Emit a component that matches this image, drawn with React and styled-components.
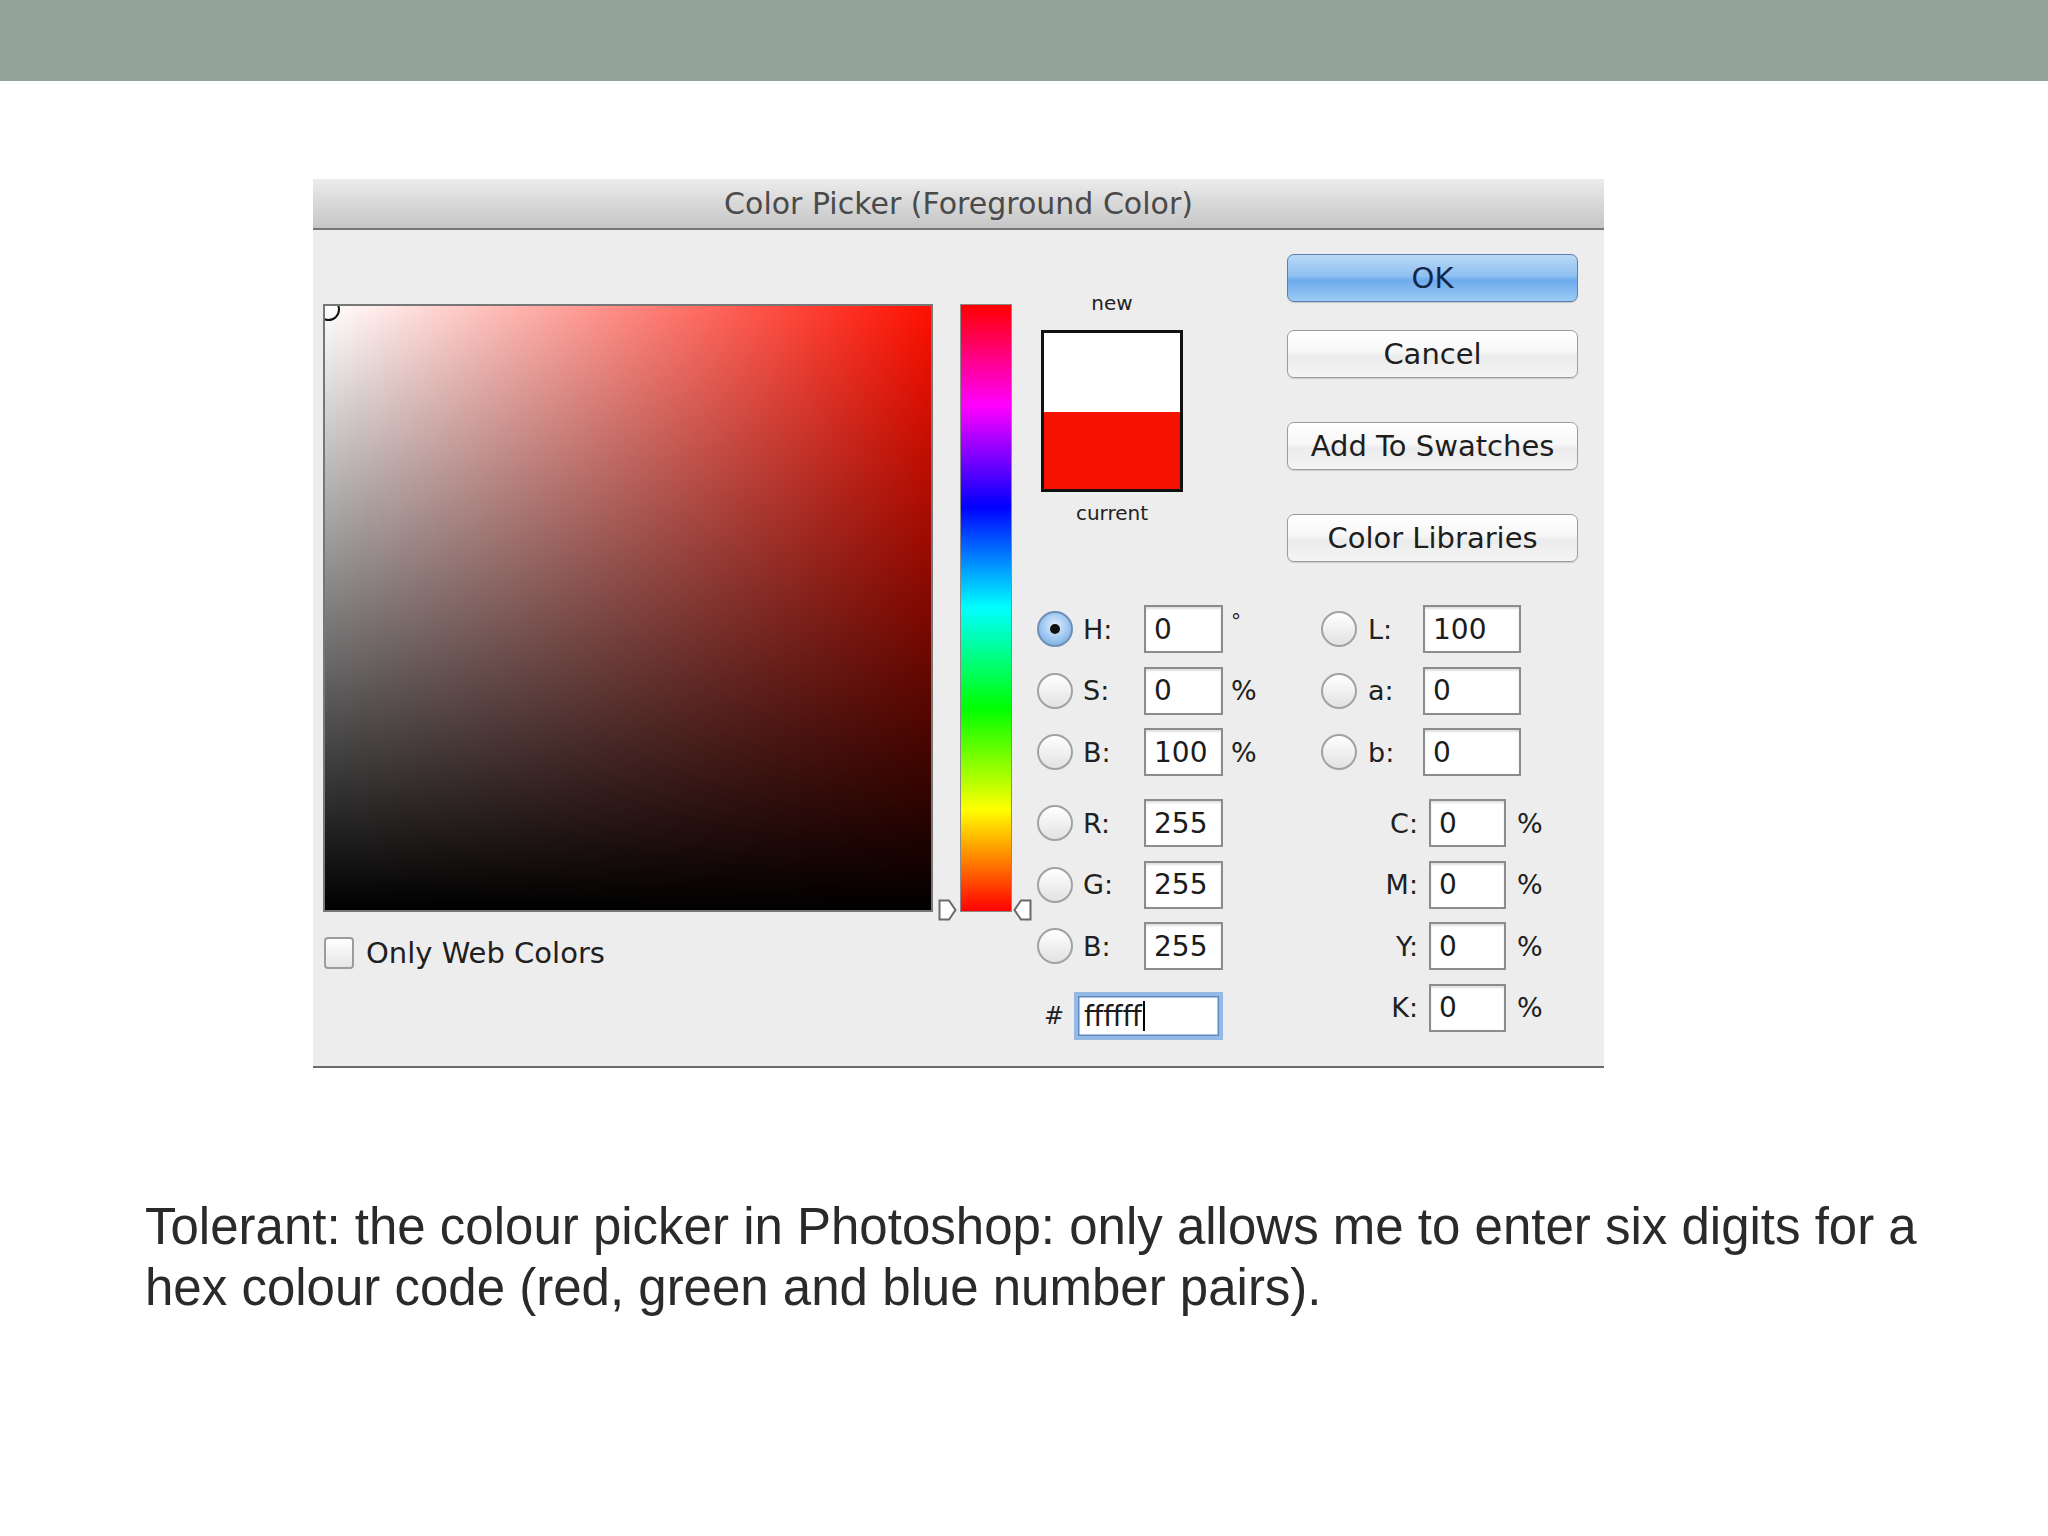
import React from "react";
import styled, { createGlobalStyle } from "styled-components";

const Global = createGlobalStyle`
  html, body { margin: 0; padding: 0; background: #ffffff; }
  #root { width: 2048px; height: 1536px; overflow: hidden; }
`;

const Page = styled.div`
  width: 2048px;
  height: 1536px;
  background: #ffffff;
  display: flex;
  flex-direction: column;
`;

const TopBar = styled.div`
  height: 81px;
  background: #93a39b;
  flex-shrink: 0;
`;

const Dialog = styled.div`
  margin: 98px 0 0 313px;
  width: 1291px;
  height: 889px;
  box-sizing: border-box;
  background: #ededed;
  border-bottom: 2px solid #6c6c6c;
  display: flex;
  flex-direction: column;
  font-family: "DejaVu Sans", "Open Sans", sans-serif;
`;

const TitleBar = styled.div`
  height: 51px;
  box-sizing: border-box;
  background: linear-gradient(#ececec 0%, #dadada 45%, #c6c6c6 100%);
  border-bottom: 2px solid #777777;
  display: flex;
  align-items: center;
  justify-content: center;
  font-size: 30px;
  color: #4a4a4a;
`;

const Body = styled.div`
  flex: 1;
  display: flex;
  align-items: flex-start;
  padding-left: 10px;
`;

const LeftCol = styled.div`
  margin-top: 74px;
  display: flex;
  flex-direction: column;
`;

const ColorField = styled.div`
  position: relative;
  width: 610px;
  height: 608px;
  box-sizing: border-box;
  border: 2px solid #777777;
  overflow: hidden;
  background: linear-gradient(to top, #000000, rgba(0, 0, 0, 0)),
    linear-gradient(to right, #ffffff, #ff1000);
`;

const Marker = styled.span`
  position: absolute;
  left: -8px;
  top: -8px;
  width: 19px;
  height: 19px;
  border-radius: 50%;
  border: 2px solid #111111;
`;

const CheckRow = styled.label`
  margin-top: 24px;
  display: flex;
  align-items: center;
  gap: 12px;
  font-size: 29px;
  color: #202020;
`;

const CheckBox = styled.span`
  width: 30px;
  height: 32px;
  box-sizing: border-box;
  border: 2px solid #9c9c9c;
  border-radius: 4px;
  background: linear-gradient(#ffffff, #e6e6e6);
  margin-left: 1px;
`;

const SliderCol = styled.div`
  position: relative;
  margin: 74px 0 0 27px;
  width: 52px;
  height: 608px;
  box-sizing: border-box;
  border: 1px solid #8a8a8a;
  background: linear-gradient(
    to bottom,
    #ff0000 0%,
    #ff00ff 16.67%,
    #0000ff 33.33%,
    #00ffff 50%,
    #00ff00 66.67%,
    #ffff00 83.33%,
    #ff0000 100%
  );
`;

const ArrowSvg = styled.svg`
  position: absolute;
  bottom: -10px;
  left: ${(p) => p.$left}px;
`;

const RightArea = styled.div`
  margin-left: 25px;
  padding-top: 24px;
  display: flex;
  flex-direction: column;
`;

const TopSection = styled.div`
  display: flex;
  align-items: flex-start;
`;

const SwatchGroup = styled.div`
  margin: 37px 0 0 4px;
  width: 142px;
  display: flex;
  flex-direction: column;
  align-items: center;
`;

const SmallLabel = styled.div`
  font-size: 20px;
  line-height: 24px;
  height: 24px;
  color: #222222;
  margin-top: ${(p) => p.$mt || 0}px;
`;

const Swatch = styled.div`
  margin-top: 15px;
  width: 142px;
  height: 162px;
  box-sizing: border-box;
  border: 3px solid #111111;
  display: flex;
  flex-direction: column;
`;

const SwatchPart = styled.div`
  flex: ${(p) => p.$flex};
  background: ${(p) => p.$color};
`;

const ButtonCol = styled.div`
  margin-left: 104px;
  width: 291px;
  display: flex;
  flex-direction: column;
`;

const Button = styled.button`
  height: 48px;
  margin-top: ${(p) => p.$mt || 0}px;
  box-sizing: border-box;
  border-radius: 7px;
  border: 1.5px solid ${(p) => (p.$primary ? "#5b7fae" : "#9d9d9d")};
  background: ${(p) =>
    p.$primary
      ? "linear-gradient(#b9d8f7 0%, #8fc0f1 45%, #6eabec 55%, #9ccbf6 100%)"
      : "linear-gradient(#ffffff 0%, #f7f7f7 45%, #ececec 55%, #f4f4f4 100%)"};
  box-shadow: 0 1px 1px rgba(0, 0, 0, 0.15);
  font-family: "DejaVu Sans", "Open Sans", sans-serif;
  font-size: 29px;
  color: ${(p) => (p.$primary ? "#13284a" : "#1e1e1e")};
  padding: 0;
  display: flex;
  align-items: center;
  justify-content: center;
`;

const FieldsSection = styled.div`
  margin-top: 43px;
  display: flex;
  align-items: flex-start;
`;

const Group = styled.div`
  width: ${(p) => p.$w}px;
  display: flex;
  flex-direction: column;
  gap: 13.5px;
`;

const Row = styled.div`
  height: 48px;
  display: flex;
  align-items: center;
  margin-top: ${(p) => p.$mt || 0}px;
`;

const Radio = styled.span`
  width: 36px;
  height: 36px;
  flex-shrink: 0;
  box-sizing: border-box;
  border-radius: 50%;
  border: 2px solid ${(p) => (p.$on ? "#6f8fb8" : "#a2a2a2")};
  background: ${(p) =>
    p.$on
      ? "radial-gradient(circle at 50% 40%, #e2f0ff 0%, #9cc6f0 55%, #6c9fd8 100%)"
      : "linear-gradient(#ffffff, #e2e2e2)"};
  display: flex;
  align-items: center;
  justify-content: center;
  margin-right: ${(p) => p.$mr}px;
  &::after {
    content: "";
    display: ${(p) => (p.$on ? "block" : "none")};
    width: 10px;
    height: 10px;
    border-radius: 50%;
    background: #101010;
  }
`;

const Label = styled.span`
  width: ${(p) => p.$w}px;
  flex-shrink: 0;
  font-size: 27px;
  color: #202020;
  text-align: ${(p) => (p.$right ? "right" : "left")};
  padding-right: ${(p) => (p.$right ? 11 : 0)}px;
  box-sizing: border-box;
`;

const Field = styled.div`
  width: ${(p) => p.$w}px;
  height: 48px;
  flex-shrink: 0;
  box-sizing: border-box;
  border: 2px solid #8c8c8c;
  background: #ffffff;
  box-shadow: inset 0 2px 2px rgba(0, 0, 0, 0.12);
  padding-left: 8px;
  display: flex;
  align-items: center;
  font-size: 28px;
  color: #1c1c1c;
`;

const HexField = styled(Field)`
  border: 4px solid #94b9e4;
  box-shadow: inset 0 0 0 1.5px #5f89c2;
  padding-left: 6px;
`;

const Caret = styled.span`
  width: 2px;
  height: 30px;
  background: #000000;
  margin-left: 1px;
`;

const Unit = styled.span`
  margin-left: ${(p) => p.$ml || 8}px;
  font-size: ${(p) => (p.$small ? 20 : 27)}px;
  color: #202020;
  align-self: ${(p) => (p.$small ? "flex-start" : "center")};
  margin-top: ${(p) => (p.$small ? 4 : 0)}px;
`;

const Hash = styled.span`
  margin-left: 7px;
  width: 30px;
  font-size: 24px;
  color: #202020;
`;

const Caption = styled.p`
  margin: 128px 0 0 145px;
  width: 1840px;
  font-family: "Liberation Sans", Arial, sans-serif;
  font-size: 51px;
  line-height: 61px;
  color: #2a2a2a;
`;

function Arrow({ left, dir }) {
  const pts =
    dir === "right"
      ? "1.5,1.5 11,1.5 17.5,11 11,20.5 1.5,20.5"
      : "17.5,1.5 8,1.5 1.5,11 8,20.5 17.5,20.5";
  return (
    <ArrowSvg $left={left} width="19" height="22" viewBox="0 0 19 22">
      <polygon points={pts} fill="#ffffff" stroke="#6a6a6a" strokeWidth="2" />
    </ArrowSvg>
  );
}

function HsbRow({ letter, value, unit, on, mt, small }) {
  return (
    <Row $mt={mt}>
      <Radio $on={on} $mr={10} />
      <Label $w={61}>{letter}:</Label>
      <Field $w={79}>{value}</Field>
      {unit && <Unit $small={small}>{unit}</Unit>}
    </Row>
  );
}

function LabRow({ letter, value }) {
  return (
    <Row>
      <Radio $mr={11} />
      <Label $w={55}>{letter}:</Label>
      <Field $w={98}>{value}</Field>
    </Row>
  );
}

function CmykRow({ letter, mt }) {
  return (
    <Row $mt={mt}>
      <Label $w={108} $right>
        {letter}:
      </Label>
      <Field $w={77}>0</Field>
      <Unit $ml={11}>%</Unit>
    </Row>
  );
}

export default function App() {
  return (
    <Page>
      <Global />
      <TopBar />
      <Dialog>
        <TitleBar>Color Picker (Foreground Color)</TitleBar>
        <Body>
          <LeftCol>
            <ColorField>
              <Marker />
            </ColorField>
            <CheckRow>
              <CheckBox />
              Only Web Colors
            </CheckRow>
          </LeftCol>
          <SliderCol>
            <Arrow left={-23} dir="right" />
            <Arrow left={52} dir="left" />
          </SliderCol>
          <RightArea>
            <TopSection>
              <SwatchGroup>
                <SmallLabel>new</SmallLabel>
                <Swatch>
                  <SwatchPart $flex={79} $color="#ffffff" />
                  <SwatchPart $flex={77} $color="#f51200" />
                </Swatch>
                <SmallLabel $mt={9}>current</SmallLabel>
              </SwatchGroup>
              <ButtonCol>
                <Button $primary>OK</Button>
                <Button $mt={28}>Cancel</Button>
                <Button $mt={44}>Add To Swatches</Button>
                <Button $mt={44}>Color Libraries</Button>
              </ButtonCol>
            </TopSection>
            <FieldsSection>
              <Group $w={284}>
                <HsbRow letter="H" value="0" unit="°" small on />
                <HsbRow letter="S" value="0" unit="%" />
                <HsbRow letter="B" value="100" unit="%" />
                <HsbRow letter="R" value="255" mt={9.5} />
                <HsbRow letter="G" value="255" />
                <HsbRow letter="B" value="255" />
                <Row $mt={8.5}>
                  <Hash>#</Hash>
                  <HexField $w={149}>
                    ffffff
                    <Caret />
                  </HexField>
                </Row>
              </Group>
              <Group $w={260}>
                <LabRow letter="L" value="100" />
                <LabRow letter="a" value="0" />
                <LabRow letter="b" value="0" />
                <CmykRow letter="C" mt={9.5} />
                <CmykRow letter="M" />
                <CmykRow letter="Y" />
                <CmykRow letter="K" />
              </Group>
            </FieldsSection>
          </RightArea>
        </Body>
      </Dialog>
      <Caption>
        Tolerant: the colour picker in Photoshop: only allows me to enter six
        digits for a hex colour code (red, green and blue number pairs).
      </Caption>
    </Page>
  );
}
